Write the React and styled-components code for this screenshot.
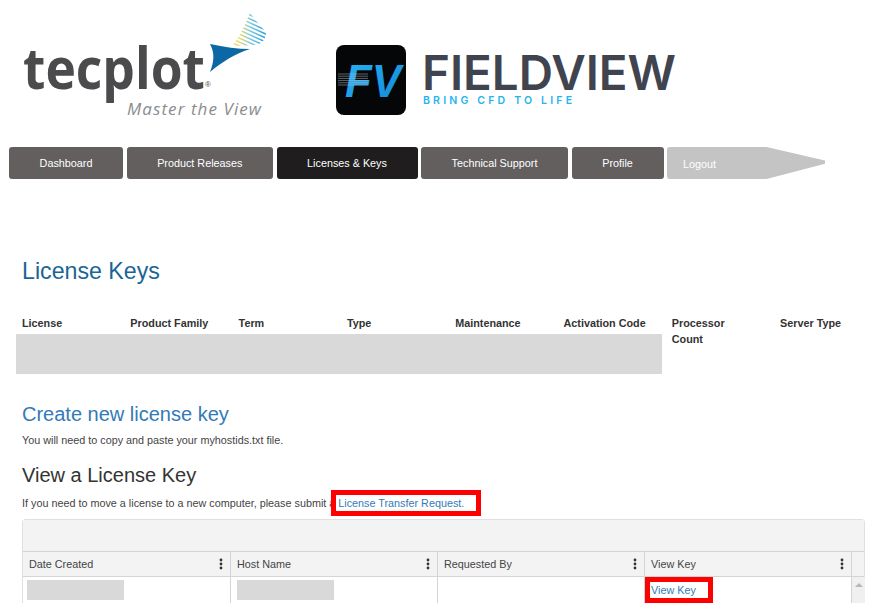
import React from "react";
import styled, { createGlobalStyle } from "styled-components";

const tabs = [
  { label: "Dashboard", width: 114 },
  { label: "Product Releases", width: 146.5 },
  { label: "Licenses & Keys", width: 141 },
  { label: "Technical Support", width: 147 },
  { label: "Profile", width: 92 },
];

const licenseColumns = [
  "License",
  "Product Family",
  "Term",
  "Type",
  "Maintenance",
  "Activation Code",
  "Processor Count",
  "Server Type",
];

const gridColumns = ["Date Created", "Host Name", "Requested By", "View Key"];

const TecplotLogo = () => (
  <LogoSvg width="280" height="125" viewBox="0 0 280 125">
    <defs>
      <linearGradient id="wing" x1="0" y1="0" x2="1" y2="0.25">
        <stop offset="0" stopColor="#d8d67a" />
        <stop offset="0.35" stopColor="#f0d860" />
        <stop offset="0.65" stopColor="#7fcbe0" />
        <stop offset="1" stopColor="#2fa5dc" />
      </linearGradient>
      <clipPath id="wingClip">
        <path d="M250 12 C254 20 262 27 266 33 C266 38 263 42 259 44 C250 46 240 46 232 46 C240 36 246 24 250 12Z" />
      </clipPath>
    </defs>
    <g clipPath="url(#wingClip)" stroke="url(#wing)" strokeWidth="1.5">
      {Array.from({ length: 14 }).map((_, i) => (
        <line key={i} x1={226} y1={-4 + i * 4} x2={270} y2={16 + i * 4} />
      ))}
    </g>
    <path d="M210 44 C224 47 238 49 250 49 C236 53 222 62 210 72 C214 62 215 53 210 44Z" fill="#0b68a5" />
    <text x="23" y="89" fontFamily="'Open Sans', sans-serif" fontWeight="700" fontSize="58" fill="#4b4b4d" textLength="182" lengthAdjust="spacingAndGlyphs">
      tecplot
    </text>
    <text x="205" y="87" fontFamily="'Liberation Sans', sans-serif" fontSize="8" fill="#4b4b4d">®</text>
    <text x="127" y="115" fontFamily="'Open Sans', sans-serif" fontStyle="italic" fontSize="17" fill="#8a8c8e" textLength="134">
      Master the View
    </text>
  </LogoSvg>
);

const FieldviewLogo = () => (
  <LogoSvg width="345" height="80" viewBox="0 0 345 80">
    <defs>
      <linearGradient id="fv" x1="0" y1="0" x2="1" y2="1">
        <stop offset="0" stopColor="#2ab4f2" />
        <stop offset="1" stopColor="#1285d8" />
      </linearGradient>
    </defs>
    <rect x="1" y="5" width="70" height="70" rx="8" fill="#050608" />
    <text x="10" y="57" fontFamily="'Liberation Sans', sans-serif" fontWeight="700" fontStyle="italic" fontSize="46" fill="url(#fv)" textLength="56" lengthAdjust="spacingAndGlyphs">
      FV
    </text>
    <g stroke="#b9c4cc" strokeWidth="0.5">
      {[0, 1, 2, 3, 4, 5].map((i) => (
        <line key={i} x1="3" y1={34 + i * 2.2} x2="33" y2={34 + i * 2.2} />
      ))}
    </g>
    <text x="87" y="50" fontFamily="'Inter', sans-serif" fontWeight="600" fontSize="48" fill="#3f444f" textLength="254" lengthAdjust="spacingAndGlyphs">
      FIELDVIEW
    </text>
    <text x="88" y="64" fontFamily="'Inter', sans-serif" fontWeight="600" fontSize="10.5" fill="#25b4ee" textLength="149">
      BRING CFD TO LIFE
    </text>
  </LogoSvg>
);

const Kebab = () => (
  <svg width="4" height="12" viewBox="0 0 4 12">
    <circle cx="2" cy="2" r="1.4" fill="#333" />
    <circle cx="2" cy="6" r="1.4" fill="#333" />
    <circle cx="2" cy="10" r="1.4" fill="#333" />
  </svg>
);

const App = () => (
  <Page>
    <GlobalStyle />
    <Header>
      <TecplotLogo />
      <FieldviewSlot>
        <FieldviewLogo />
      </FieldviewSlot>
    </Header>

    <Nav>
      {tabs.map((tab) => (
        <Tab key={tab.label} $width={tab.width} $active={tab.label === "Licenses & Keys"}>
          {tab.label}
        </Tab>
      ))}
      <LogoutTab>Logout</LogoutTab>
    </Nav>

    <Main>
      <PageTitle>License Keys</PageTitle>

      <LicenseTable>
        {licenseColumns.map((col) => (
          <LicenseHead key={col}>{col}</LicenseHead>
        ))}
        <Redacted />
      </LicenseTable>

      <CreateLink>Create new license key</CreateLink>
      <Note>You will need to copy and paste your myhostids.txt file.</Note>

      <SectionTitle>View a License Key</SectionTitle>
      <TransferNote>
        If you need to move a license to a new computer, please submit a
        <Highlight>
          <TextLink>License Transfer Request.</TextLink>
        </Highlight>
      </TransferNote>

      <DataGrid>
        <GridTop />
        <GridHeader>
          {gridColumns.map((col) => (
            <GridHeadCell key={col}>
              {col}
              <Kebab />
            </GridHeadCell>
          ))}
          <ScrollHead />
        </GridHeader>
        <GridRow>
          <GridCell $inset={4}>
            <CellRedaction />
          </GridCell>
          <GridCell $inset={6}>
            <CellRedaction />
          </GridCell>
          <GridCell />
          <GridCell>
            <CellHighlight>
              <TextLink>View Key</TextLink>
            </CellHighlight>
          </GridCell>
          <ScrollTrack>
            <ScrollArrow />
          </ScrollTrack>
        </GridRow>
      </DataGrid>
    </Main>
  </Page>
);

const GlobalStyle = createGlobalStyle`
  html, body {
    margin: 0;
    padding: 0;
    height: 100%;
    overflow: hidden;
    background: #fff;
  }
  * {
    box-sizing: border-box;
  }
`;

const Page = styled.div`
  width: 886px;
  height: 603px;
  overflow: hidden;
  font-family: "Liberation Sans", Arial, sans-serif;
  font-size: 10.8px;
  color: #444;
`;

const Header = styled.header`
  display: flex;
  align-items: flex-start;
  height: 147px;
`;

const LogoSvg = styled.svg`
  display: block;
  flex: none;
`;

const FieldviewSlot = styled.div`
  margin: 40px 0 0 55px;
`;

const Nav = styled.nav`
  display: flex;
  gap: 3.5px;
  padding-left: 9px;
  height: 32px;
`;

const Tab = styled.div`
  width: ${(p) => p.$width}px;
  display: flex;
  align-items: center;
  justify-content: center;
  border-radius: 3px;
  background: ${(p) => (p.$active ? "#1f1d1d" : "#635f5f")};
  color: #fff;
`;

const LogoutTab = styled.div`
  width: 158px;
  display: flex;
  align-items: center;
  padding: 2px 0 0 16px;
  background: #c4c4c4;
  color: #fff;
  border-radius: 3px 0 0 3px;
  clip-path: polygon(0 0, 63% 0, 100% 42%, 100% 52%, 63% 100%, 0 100%);
`;

const Main = styled.main`
  padding: 0 21px 0 22px;
`;

const PageTitle = styled.h1`
  margin: 78px 0 0;
  font-size: 23.2px;
  line-height: 28px;
  font-weight: 400;
  color: #1a6496;
`;

const LicenseTable = styled.div`
  position: relative;
  display: grid;
  grid-template-columns: repeat(8, 108.3px);
  margin-top: 30px;
  height: 65px;
  align-content: start;
`;

const LicenseHead = styled.div`
  padding-right: 22px;
  font-weight: 700;
  line-height: 16px;
  color: #333;
`;

const Redacted = styled.div`
  position: absolute;
  left: -6px;
  top: 19px;
  width: 646px;
  height: 40px;
  background: #d9d9d9;
`;

const CreateLink = styled.h2`
  margin: 20px 0 0;
  font-size: 20px;
  line-height: 28px;
  font-weight: 400;
  color: #337ab7;
`;

const Note = styled.p`
  margin: 4px 0 0;
  line-height: 16px;
`;

const SectionTitle = styled.h3`
  margin: 15px 0 0;
  font-size: 20px;
  line-height: 24px;
  font-weight: 400;
  color: #333;
`;

const TransferNote = styled.p`
  margin: 8px 0 0;
  line-height: 16px;
  white-space: nowrap;
`;

const TextLink = styled.span`
  color: #337ab7;
`;

const Highlight = styled.span`
  position: relative;
  margin-left: 3px;
  padding-right: 17px;
  &::after {
    content: "";
    position: absolute;
    left: -7px;
    right: 0;
    top: -7px;
    bottom: -7px;
    border: 5px solid #f00;
  }
`;

const DataGrid = styled.section`
  margin-top: 8px;
  height: 200px;
  border: 1px solid #e0e0e0;
  border-bottom: 0;
  border-radius: 4px 4px 0 0;
`;

const GridTop = styled.div`
  height: 32px;
  background: #f3f3f3;
  border-bottom: 1px solid #d4d4d4;
`;

const columnsTemplate = "208px repeat(3, 207px) 13px";

const GridHeader = styled.div`
  display: grid;
  grid-template-columns: ${columnsTemplate};
  height: 25px;
  background: #f3f3f3;
  border-bottom: 1px solid #d4d4d4;
`;

const GridHeadCell = styled.div`
  display: flex;
  align-items: center;
  justify-content: space-between;
  padding: 0 7px 0 6px;
  border-right: 1px solid #d4d4d4;
`;

const ScrollHead = styled.div``;

const GridRow = styled.div`
  display: grid;
  grid-template-columns: ${columnsTemplate};
  height: 140px;
`;

const GridCell = styled.div`
  position: relative;
  padding: 3px ${(p) => p.$inset ?? 4}px;
  border-right: 1px solid #d4d4d4;
`;

const CellRedaction = styled.div`
  width: 97px;
  height: 20px;
  background: #d9d9d9;
`;

const CellHighlight = styled.div`
  position: absolute;
  left: 0;
  top: 0;
  width: 68px;
  height: 26px;
  padding: 2px 0 0 6px;
  line-height: 22px;
  &::after {
    content: "";
    position: absolute;
    inset: 0;
    border: 5px solid #f00;
  }
`;

const ScrollTrack = styled.div`
  background: #f0f0f0;
  padding: 6px 0 0 3px;
`;

const ScrollArrow = styled.div`
  width: 0;
  height: 0;
  border-left: 4px solid transparent;
  border-right: 4px solid transparent;
  border-bottom: 4px solid #b8b8b8;
`;

export default App;
